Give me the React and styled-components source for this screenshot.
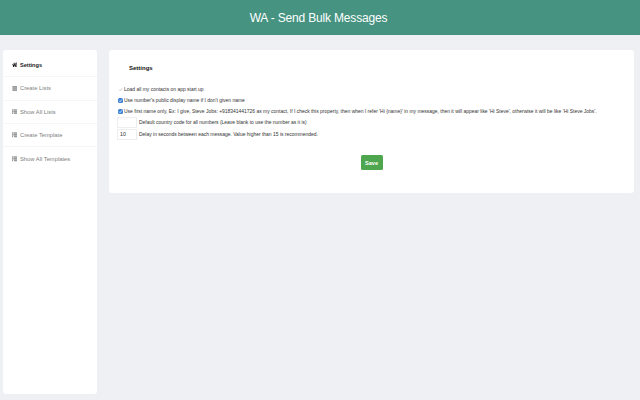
import styled, { createGlobalStyle } from 'styled-components'
import { FaHome, FaThList } from 'react-icons/fa'

const GlobalStyle = createGlobalStyle`
  html, body {
    margin: 0;
    padding: 0;
    background-color: #eef0f4;
  }
  * {
    box-sizing: border-box;
  }
  body {
    font-family: "Liberation Sans", Arial, sans-serif;
  }
`

const Page = styled.div`
  width: 640px;
  height: 400px;
  overflow: hidden;
`

const Header = styled.header`
  height: 35px;
  background-color: #459380;
  color: white;
  font-size: 12px;
  letter-spacing: -0.17px;
  display: flex;
  align-items: center;
  justify-content: center;
  padding-right: 3px;
`

const Content = styled.div`
  display: flex;
  align-items: flex-start;
  padding: 15px 6px 0 3px;
  gap: 12px;
`

const Sidebar = styled.aside`
  width: 94px;
  height: 344px;
  background-color: white;
  border-radius: 3px;
  padding-top: 4px;
  flex-shrink: 0;
`

const NavItem = styled.div`
  height: 23.3px;
  padding-left: 8.5px;
  display: flex;
  align-items: center;
  gap: 3px;
  font-size: ${(props) => (props.$active ? '5.6px' : '5.8px')};
  font-weight: ${(props) => (props.$active ? 700 : 400)};
  color: ${(props) => (props.$active ? '#222' : '#808080')};
  border-bottom: 1px solid #f6f6f6;

  &:last-child {
    border-bottom: none;
  }

  & svg {
    width: 5.5px;
    height: 5.5px;
    flex-shrink: 0;
    color: ${(props) => (props.$active ? '#222' : '#999')};
  }
`

const Panel = styled.main`
  flex: 1;
  height: 143px;
  background-color: white;
  border-radius: 3px;
  padding: 14px 8px 0;
`

const Title = styled.h2`
  margin: 0 0 11px 12px;
  font-size: 6px;
  line-height: 9px;
  font-weight: 700;
  color: #111;
`

const Option = styled.div`
  display: flex;
  align-items: center;
  height: 11px;
  gap: 1.5px;
  padding-left: 0.5px;
  font-size: 4.96px;
  color: #333;
  white-space: nowrap;
`

const Check = styled.span`
  width: 5px;
  height: 5px;
  border-radius: 1.5px;
  flex-shrink: 0;
  display: flex;
  align-items: center;
  justify-content: center;
  background-color: ${(props) => (props.$checked ? '#3b82d6' : 'transparent')};

  & svg {
    width: 5px;
    height: 5px;
  }
`

const Field = styled.div`
  display: flex;
  align-items: center;
  height: 11.5px;
  gap: 2px;
  font-size: 4.96px;
  color: #333;
  white-space: nowrap;
`

const NumberBox = styled.div`
  width: 20px;
  height: 11px;
  border: 1px solid #eeeeee;
  font-size: 5.2px;
  line-height: 9px;
  padding-left: 2px;
  color: #333;
`

const Actions = styled.div`
  display: flex;
  justify-content: center;
  margin-top: 15px;
`

const SaveButton = styled.button`
  width: 22px;
  height: 15px;
  padding: 0;
  border: none;
  border-radius: 1.5px;
  background-color: #4ea64e;
  color: white;
  font-family: inherit;
  font-size: 5.6px;
  font-weight: 700;
`

function Tick({ color }) {
  return (
    <svg viewBox="0 0 6 6">
      <path d="M1.3 3.1 2.5 4.4 4.8 1.6" fill="none" stroke={color} strokeWidth="0.9" />
    </svg>
  )
}

function ListAlt() {
  return (
    <svg viewBox="0 0 6 6">
      <rect x="0.5" y="0" width="5" height="6" fill="currentColor" />
      <path d="M0.5 2h5M0.5 4h5" stroke="#ddd" strokeWidth="0.4" />
    </svg>
  )
}

export default function App() {
  return (
    <Page>
      <GlobalStyle />
      <Header>WA - Send Bulk Messages</Header>
      <Content>
        <Sidebar>
          <NavItem $active><FaHome />Settings</NavItem>
          <NavItem><ListAlt />Create Lists</NavItem>
          <NavItem><FaThList />Show All Lists</NavItem>
          <NavItem><FaThList />Create Template</NavItem>
          <NavItem><FaThList />Show All Templates</NavItem>
        </Sidebar>
        <Panel>
          <Title>Settings</Title>
          <Option><Check><Tick color="#bbb" /></Check>Load all my contacts on app start up</Option>
          <Option><Check $checked><Tick color="white" /></Check>Use number's public display name if I don't given name</Option>
          <Option><Check $checked><Tick color="white" /></Check>Use first name only, Ex: I give, Steve Jobs: +918341441726 as my contact, If I check this property, then when I refer 'Hi {'{name}'}' in my message, then it will appear like 'Hi Steve', otherwise it will be like 'Hi Steve Jobs'.</Option>
          <Field><NumberBox />Default country code for all numbers (Leave blank to use the number as it is)</Field>
          <Field><NumberBox>10</NumberBox>Delay in seconds between each message. Value higher than 15 is recommended.</Field>
          <Actions><SaveButton>Save</SaveButton></Actions>
        </Panel>
      </Content>
    </Page>
  )
}
